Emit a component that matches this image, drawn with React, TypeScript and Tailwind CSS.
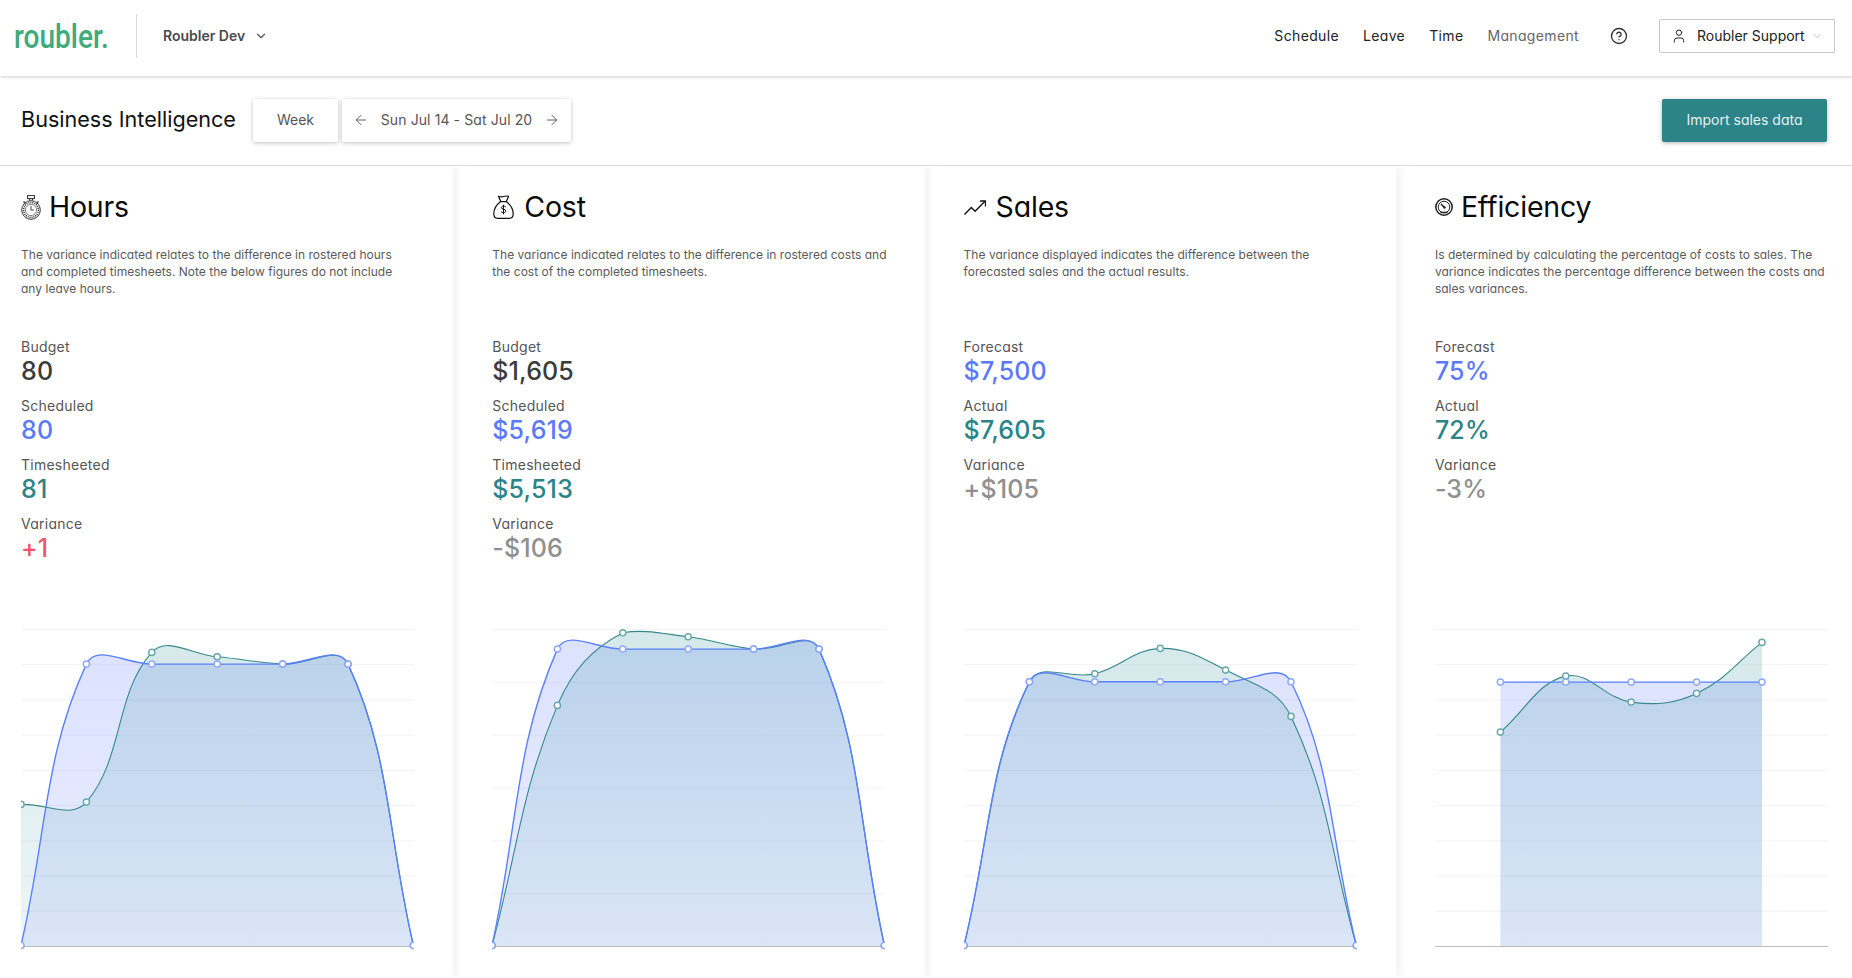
import { ArrowLeft, ArrowRight, ChevronDown, CircleHelp, User } from "lucide-react";

type Pt = { x: number; y: number };

const STEP = 65.4;
const BASE = 316.1;

const clampY = (y: number) => Math.min(317, Math.max(0, y));

// same spline as the chart library draws, tension 0.4, control points kept in the chart area
function spline(points: Pt[]) {
  const t = 0.4;
  const ctrl = points.map((cur, i) => {
    const prev = points[i - 1] ?? cur;
    const next = points[i + 1] ?? cur;
    const d01 = Math.hypot(cur.x - prev.x, cur.y - prev.y);
    const d12 = Math.hypot(next.x - cur.x, next.y - cur.y);
    const sum = d01 + d12 || 1;
    const fa = (t * d01) / sum;
    const fb = (t * d12) / sum;
    return {
      c1: { x: cur.x - fa * (next.x - prev.x), y: clampY(cur.y - fa * (next.y - prev.y)) },
      c2: { x: cur.x + fb * (next.x - prev.x), y: clampY(cur.y + fb * (next.y - prev.y)) },
    };
  });
  let d = `M${points[0].x} ${points[0].y}`;
  for (let i = 1; i < points.length; i++) {
    const a = ctrl[i - 1].c2;
    const b = ctrl[i].c1;
    d += ` C${a.x} ${a.y} ${b.x} ${b.y} ${points[i].x} ${points[i].y}`;
  }
  return d;
}

function toPoints(values: (number | null)[]) {
  const out: Pt[] = [];
  values.forEach((y, i) => {
    if (y !== null) out.push({ x: i * STEP, y: y + 0.4 });
  });
  return out;
}

function AreaFill({ values, id }: { values: (number | null)[]; id: string }) {
  const pts = toPoints(values);
  const first = pts[0];
  const last = pts[pts.length - 1];
  return <path d={`${spline(pts)} L${last.x} 317 L${first.x} 317 Z`} fill={`url(#${id})`} />;
}

function AreaLine({ values, line, point, width }: { values: (number | null)[]; line: string; point: string; width: number }) {
  const pts = toPoints(values);
  return (
    <g>
      <path d={spline(pts)} fill="none" stroke={line} strokeWidth={width} />
      {pts.map((p) => (
        <circle key={p.x} cx={p.x} cy={p.y} r="3.1" fill="#fff" stroke={point} strokeWidth="1.4" />
      ))}
    </g>
  );
}

function Chart({ name, blue, teal, lines }: { name: string; blue: (number | null)[]; teal: (number | null)[]; lines: number }) {
  const grid = Array.from({ length: lines }, (_, i) => (i * 317) / lines);
  return (
    <svg viewBox="0 0 393 322" className="block h-[322px] w-[393px]" aria-hidden="true">
      <defs>
        <linearGradient id={`${name}b`} gradientUnits="userSpaceOnUse" x1="0" y1="0" x2="0" y2="317">
          <stop offset="0" stopColor="#4f6eff" stopOpacity="0.2" />
          <stop offset="1" stopColor="#4f6eff" stopOpacity="0.12" />
        </linearGradient>
        <linearGradient id={`${name}t`} gradientUnits="userSpaceOnUse" x1="0" y1="0" x2="0" y2="317">
          <stop offset="0" stopColor="#2a8b96" stopOpacity="0.2" />
          <stop offset="1" stopColor="#2a8b96" stopOpacity="0.08" />
        </linearGradient>
      </defs>
      {grid.map((y) => (
        <line key={y} x1="0" x2="393" y1={y + 0.5} y2={y + 0.5} stroke="#f3f3f4" strokeWidth="1" />
      ))}
      <line x1="0" x2="393" y1="317.5" y2="317.5" stroke="#bdbdbd" strokeWidth="1" />
      <AreaFill values={blue} id={`${name}b`} />
      <AreaFill values={teal} id={`${name}t`} />
      <AreaLine values={teal} line="#36888d" point="#66a8aa" width={1.1} />
      <AreaLine values={blue} line="#5a80fb" point="#8ea6fb" width={1.4} />
    </svg>
  );
}

function Stopwatch() {
  return (
    <svg viewBox="0 0 20 25" className="h-[25px] w-[20px] shrink-0" fill="none" stroke="#333" aria-hidden="true">
      <rect x="6.5" y="0.6" width="7" height="3" strokeWidth="1" />
      <path d="M8.5 3.6v2M11.5 3.600v2M2.5 6.5l2 2M17.5 6.5l-2 2" strokeWidth="1.2" />
      <circle cx="10" cy="15" r="9.3" strokeWidth="1" />
      <circle cx="10" cy="15" r="7.4" strokeWidth="1.6" strokeDasharray="1 1" />
      <circle cx="10" cy="15" r="5.6" strokeWidth="0.6" />
      <path d="M10 11v4h3" strokeWidth="0.9" />
    </svg>
  );
}

function MoneyBag() {
  return (
    <svg viewBox="0 0 21 24" className="ml-[1px] h-[24px] w-[21px] shrink-0" fill="none" stroke="#111" strokeWidth="1.2" strokeLinejoin="round" aria-hidden="true">
      <path d="M5.500 1.200c1.500.6 3 1 5 .3s3.500-.7 5-.1l-2.200 5.200H7.700z" />
      <path d="M7.700 6.600C3.800 9.500.8 14.500.8 19c0 2.700 1.200 4.300 4 4.300h11.400c2.800 0 4-1.600 4-4.300 0-4.500-3-9.500-6.900-12.400" />
      <path d="M12.700 12c-.5-.7-1.200-.9-2.200-.9-1.200 0-2.100.6-2.100 1.600 0 2.300 4.400 1 4.400 3.300 0 1-.9 1.700-2.300 1.700-1.100 0-1.900-.3-2.400-1M10.500 9.800v9.400" strokeWidth="1" />
    </svg>
  );
}

function Trend() {
  return (
    <svg viewBox="0 0 22 15" className="h-[15px] w-[22px] shrink-0" fill="none" stroke="#111" strokeWidth="1.4" aria-hidden="true">
      <path d="M0.500 14.500l6.800-7 3.800 3.800 9.600-9.800" />
      <path d="M16 1h5.500v5.500" fill="none" strokeWidth="1.300" />
    </svg>
  );
}

function Gauge() {
  return (
    <svg viewBox="0 0 18 18" className="h-[18px] w-[18px] shrink-0" fill="none" stroke="#222" aria-hidden="true">
      <circle cx="9" cy="9" r="8.200" strokeWidth="1.500" />
      <circle cx="9" cy="9" r="5.800" strokeWidth="1" />
      <path d="M6 6l3.500 3.500" strokeWidth="1.500" />
      <circle cx="9.500" cy="9.500" r="1.200" fill="#222" stroke="none" />
      <path d="M5.500 14.500h7" strokeWidth="1.500" />
    </svg>
  );
}

const columns = [
  {
    title: "Hours",
    icon: <Stopwatch />,
    gap: "gap-[8px]",
    desc: ["The variance indicated relates to the difference in rostered hours", "and completed timesheets. Note the below figures do not include", "any leave hours."],
    stats: [
      ["Budget", "80", "text-[#3b3b3b]"],
      ["Scheduled", "80", "text-[#5b79fb]"],
      ["Timesheeted", "81", "text-[#2a8488]"],
      ["Variance", "+1", "text-[#f2566c]"],
    ],
    lines: 9,
    blue: [BASE, 34.7, 34.7, 34.7, 34.7, 34.7, BASE],
    teal: [175, 172.7, 23, 27.4, 34.7, 34.7, BASE],
  },
  {
    title: "Cost",
    icon: <MoneyBag />,
    gap: "gap-[10px]",
    desc: ["The variance indicated relates to the difference in rostered costs and", "the cost of the completed timesheets."],
    stats: [
      ["Budget", "$1,605", "text-[#3b3b3b]"],
      ["Scheduled", "$5,619", "text-[#5b79fb]"],
      ["Timesheeted", "$5,513", "text-[#2a8488]"],
      ["Variance", "-$106", "text-[#8f8f8f]"],
    ],
    lines: 6,
    blue: [BASE, 19.7, 19.7, 19.7, 19.7, 19.7, BASE],
    teal: [BASE, 76, 3.4, 7.4, 19.7, 19.7, BASE],
  },
  {
    title: "Sales",
    icon: <Trend />,
    gap: "gap-[10px]",
    desc: ["The variance displayed indicates the difference between the", "forecasted sales and the actual results."],
    stats: [
      ["Forecast", "$7,500", "text-[#5b79fb]"],
      ["Actual", "$7,605", "text-[#2a8488]"],
      ["Variance", "+$105", "text-[#8f8f8f]"],
    ],
    lines: 9,
    blue: [BASE, 52.4, 52.4, 52.4, 52.4, 52.4, BASE],
    teal: [BASE, 52.4, 44.4, 19, 40.7, 87, BASE],
  },
  {
    title: "Efficiency",
    icon: <Gauge />,
    gap: "gap-[8px]",
    desc: ["Is determined by calculating the percentage of costs to sales. The", "variance indicates the percentage difference between the costs and", "sales variances."],
    stats: [
      ["Forecast", "75%", "text-[#5b79fb]"],
      ["Actual", "72%", "text-[#2a8488]"],
      ["Variance", "-3%", "text-[#8f8f8f]"],
    ],
    lines: 9,
    blue: [null, 52.7, 52.7, 52.7, 52.7, 52.7, null],
    teal: [null, 102.7, 46.7, 72.7, 64, 13, null],
  },
];

function Header() {
  return (
    <header className="relative z-10 flex h-[76px] items-center bg-white pb-[4px] pl-[14px] pr-[17px] shadow-[0_1px_3px_rgba(0,0,0,0.2)]">
      <span className="w-[95px] origin-left scale-x-[0.85] text-[33px] font-medium leading-none text-[#3fab78] [font-family:Roboto,sans-serif]">roubler.</span>
      <div className="ml-[27px] h-[44px] w-px bg-[#dcdcdc]" />
      <span className="ml-[26px] pb-[2px] text-[14px] font-semibold text-[#4a4a4a]">Roubler Dev</span>
      <ChevronDown className="ml-[9px] text-[#555]" size={14} strokeWidth={2} />
      <nav className="ml-auto flex items-center gap-[24px] pb-[2px] text-[14px] tracking-[0.35px] text-[#222]">
        <span>Schedule</span>
        <span>Leave</span>
        <span>Time</span>
        <span className="text-[#666]">Management</span>
      </nav>
      <CircleHelp className="ml-[31px] text-[#333]" size={18} strokeWidth={1.800} />
      <button type="button" className="ml-[31px] flex h-[34px] w-[176px] items-center rounded-[2px] border border-[#c9c9c9] pl-[11px] text-[14px] text-[#222]">
        <User size={16} strokeWidth={1.500} />
        <span className="ml-[10px] pb-[2px]">Roubler Support</span>
        <ChevronDown className="ml-[6px] text-[#999]" size={12} strokeWidth={1.300} />
      </button>
    </header>
  );
}

function Toolbar() {
  return (
    <div className="flex h-[90px] items-center border-b border-[#dedede] bg-white pl-[21px] pr-[25px]">
      <h1 className="w-[232px] pb-[2px] text-[21.600px] font-normal text-[#111]">Business Intelligence</h1>
      <button type="button" className="flex h-[43px] w-[85px] items-center justify-center rounded-[2px] bg-white pb-[3px] text-[14px] text-[#555] shadow-[0_1px_4px_rgba(0,0,0,0.25)]">
        Week
      </button>
      <div className="ml-[4px] flex h-[43px] w-[229px] items-center justify-between rounded-[2px] bg-white px-[11px] pb-[2px] text-[14px] tracking-[0.1px] text-[#555] shadow-[0_1px_4px_rgba(0,0,0,0.25)]">
        <ArrowLeft size={16} strokeWidth={1.400} />
        <span>Sun Jul 14 - Sat Jul 20</span>
        <ArrowRight size={16} strokeWidth={1.400} />
      </div>
      <button type="button" className="ml-auto h-[43px] w-[165px] rounded-[2px] bg-[#2c8388] pb-[3px] text-[14px] text-[#e6f2f2] shadow-[0_1px_4px_rgba(0,0,0,0.3)]">
        Import sales data
      </button>
    </div>
  );
}

export default function App() {
  return (
    <div className="h-[978px] w-full overflow-hidden bg-white [font-family:Inter,sans-serif] [font-feature-settings:'cv11']">
      <Header />
      <Toolbar />
      <main className="flex">
        {columns.map((col) => (
          <section key={col.title} className="mr-[18px] h-[812px] w-[453.300px] shrink-0 bg-white pl-[21px] shadow-[6px_0_5px_-1px_rgba(0,0,0,0.045)]">
            <div className={`flex h-[40px] items-center ${col.gap} mt-[21px]`}>
              {col.icon}
              <h2 className="text-[28.500px] font-normal tracking-[-0.2px] text-[#0b0b0b]">{col.title}</h2>
            </div>
            <p className="mt-[19px] h-[91px] text-[12px] leading-[17px] tracking-[0.02px] text-[#5a5a5a]">
              {col.desc.map((line) => (
                <span key={line} className="block whitespace-nowrap">
                  {line}
                </span>
              ))}
            </p>
            <div className="h-[292px]">
              {col.stats.map(([label, value, color]) => (
                <div key={label} className="h-[59px]">
                  <div className="text-[14px] leading-[20px] tracking-[0.25px] text-[#555]">{label}</div>
                  <div className={`mt-[1px] text-[25px] font-medium leading-[26px] tracking-[0.15px] ${color}`}>{value}</div>
                </div>
              ))}
            </div>
            <Chart name={col.title} blue={col.blue} teal={col.teal} lines={col.lines} />
          </section>
        ))}
      </main>
    </div>
  );
}
